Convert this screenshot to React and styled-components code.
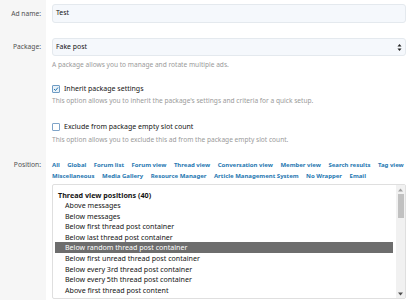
import React from "react";
import styled, { createGlobalStyle } from "styled-components";

const GlobalStyle = createGlobalStyle`
  body {
    margin: 0;
    background: #fff;
    font-family: "Noto Sans", "Open Sans", sans-serif;
  }
`;

const links = [
  "All",
  "Global",
  "Forum list",
  "Forum view",
  "Thread view",
  "Conversation view",
  "Member view",
  "Search results",
  "Tag view",
  "Miscellaneous",
  "Media Gallery",
  "Resource Manager",
  "Article Management System",
  "No Wrapper",
  "Email",
];

const positions = [
  "Above messages",
  "Below messages",
  "Below first thread post container",
  "Below last thread post container",
  "Below random thread post container",
  "Below first unread thread post container",
  "Below every 3rd thread post container",
  "Below every 5th thread post container",
  "Above first thread post content",
  "Above last thread post content",
];

const App = () => {
  return (
    <Page>
      <GlobalStyle />
      <Row>
        <Label $top={7}>Ad name:</Label>
        <Field $pt={4}>
          <Input>Test</Input>
        </Field>
      </Row>
      <Row>
        <Label $top={17}>Package:</Label>
        <Field $pt={15}>
          <Select>
            Fake post
            <Arrows>
              <svg width="5" height="9" viewBox="0 0 5 9">
                <path d="M0.5 3.5 L2.5 1 L4.5 3.5 Z" fill="#222" />
                <path d="M0.5 5.5 L2.5 8 L4.5 5.5 Z" fill="#222" />
              </svg>
            </Arrows>
          </Select>
          <Help $mt={4}>A package allows you to manage and rotate multiple ads.</Help>
          <Check $mt={13}>
            <Box $checked>
              <svg width="6" height="6" viewBox="0 0 6 6">
                <path d="M1 3 L2.5 4.5 L5 1.5" fill="none" stroke="#2577b1" strokeWidth="1" />
              </svg>
            </Box>
            Inherit package settings
          </Check>
          <Help $mt={1}>This option allows you to inherit the package's settings and criteria for a quick setup.</Help>
          <Check $mt={15}>
            <Box />
            Exclude from package empty slot count
          </Check>
          <Help $mt={2}>This option allows you to exclude this ad from the package empty slot count.</Help>
        </Field>
      </Row>
      <Row>
        <Label $top={13}>Position:</Label>
        <Field $pt={14.5}>
          <Links>
            {links.map((l) => (
              <TabLink key={l}>{l}</TabLink>
            ))}
          </Links>
          <ListBox>
            <List>
              <Group>Thread view positions (40)</Group>
              {positions.map((p) => (
                <Item key={p} $selected={p === "Below random thread post container"}>
                  {p}
                </Item>
              ))}
            </List>
            <Scrollbar>
              <ScrollArrow>
                <svg width="5" height="4" viewBox="0 0 5 4">
                  <path d="M0 3.5 L2.5 0.5 L5 3.5 Z" fill="#a3a3a3" />
                </svg>
              </ScrollArrow>
              <Track>
                <Thumb />
              </Track>
              <ScrollArrow>
                <svg width="5" height="4" viewBox="0 0 5 4">
                  <path d="M0 0.5 L2.5 3.5 L5 0.5 Z" fill="#505050" />
                </svg>
              </ScrollArrow>
            </Scrollbar>
          </ListBox>
        </Field>
      </Row>
    </Page>
  );
};

export default App;

const Page = styled.div`
  width: 411px;
  height: 300px;
  overflow: hidden;
  background: linear-gradient(to right, #f6f6f6 0, #f6f6f6 46px, #fff 46px);
`;

const Row = styled.div`
  display: grid;
  grid-template-columns: 46px 1fr;
`;

const Label = styled.div`
  padding-top: ${(p) => p.$top}px;
  padding-right: 5px;
  text-align: right;
  font-size: 6.7px;
  line-height: 14px;
  color: #505050;
`;

const Field = styled.div`
  padding: ${(p) => p.$pt}px 5px 0 6px;
  display: flex;
  flex-direction: column;
`;

const Input = styled.div`
  height: 18.5px;
  box-sizing: border-box;
  border: 1px solid #e4e9ee;
  border-radius: 3px;
  background: #f5f8fc;
  padding: 0 3px;
  font-size: 6.9px;
  line-height: 16.5px;
  color: #141414;
`;

const Select = styled(Input)`
  position: relative;
`;

const Arrows = styled.span`
  position: absolute;
  right: 3px;
  top: 4px;
  display: flex;
`;

const Help = styled.div`
  margin-top: ${(p) => p.$mt}px;
  font-size: 6.6px;
  line-height: 10px;
  color: #9a9a9a;
  white-space: nowrap;
`;

const Check = styled.div`
  margin-top: ${(p) => p.$mt}px;
  display: flex;
  align-items: center;
  gap: 4px;
  font-size: 7px;
  line-height: 12px;
  color: #141414;
`;

const Box = styled.span`
  width: 6px;
  height: 6px;
  border: 1px solid ${(p) => (p.$checked ? "#6f9cc4" : "#7fa4c8")};
  border-radius: 1px;
  background: ${(p) => (p.$checked ? "#e9f1f8" : "#fff")};
  display: flex;
  align-items: center;
  justify-content: center;
`;

const Links = styled.div`
  display: flex;
  flex-wrap: wrap;
  column-gap: 7.5px;
  font-size: 6px;
  line-height: 11px;
`;

const TabLink = styled.span`
  color: #2577b1;
  font-weight: 700;
`;

const ListBox = styled.div`
  margin-top: 2.5px;
  height: 115px;
  box-sizing: border-box;
  border: 1px solid #dfdfdf;
  border-radius: 2px;
  display: flex;
  overflow: hidden;
`;

const List = styled.div`
  flex: 1;
  padding: 4.5px 3px 0 2px;
`;

const Group = styled.div`
  font-size: 7.2px;
  font-weight: 700;
  line-height: 10.6px;
  color: #141414;
  padding-left: 3px;
`;

const Item = styled.div`
  font-size: 7.1px;
  line-height: 10.6px;
  padding-left: 10px;
  color: ${(p) => (p.$selected ? "#fff" : "#141414")};
  background: ${(p) => (p.$selected ? "#6d6d6d" : "transparent")};
  white-space: nowrap;
`;

const Scrollbar = styled.div`
  width: 9px;
  background: #f1f1f1;
  display: flex;
  flex-direction: column;
`;

const ScrollArrow = styled.div`
  height: 9px;
  display: flex;
  align-items: center;
  justify-content: center;
`;

const Track = styled.div`
  flex: 1;
  padding: 0 1.5px;
`;

const Thumb = styled.div`
  height: 24px;
  background: #c1c1c1;
`;
